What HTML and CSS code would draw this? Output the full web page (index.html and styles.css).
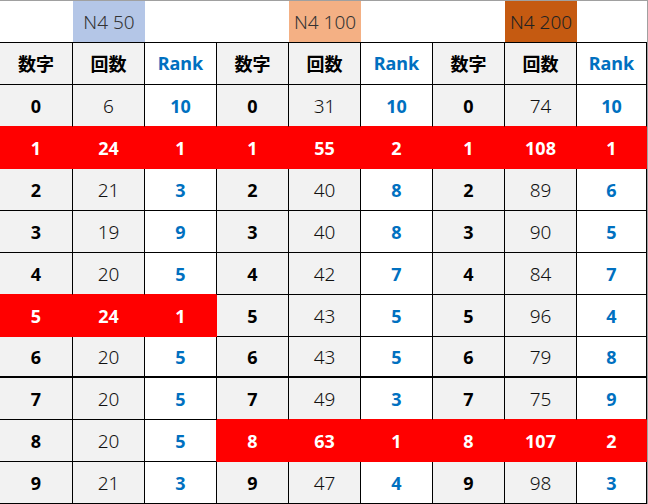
FILE: index.html
```html
<!DOCTYPE html>
<html lang="ja">
<head>
<meta charset="utf-8">
<title>N4</title>
<link rel="stylesheet" href="styles.css">
</head>
<body>
<div class="sheet">
  <div class="t"></div><div class="t lbl blue">N4 50</div><div class="t"></div>
  <div class="t"></div><div class="t lbl orange">N4 100</div><div class="t"></div>
  <div class="t"></div><div class="t lbl brown">N4 200</div><div class="t"></div>

  <div class="h d">数字</div><div class="h d">回数</div><div class="h r">Rank</div>
  <div class="h d">数字</div><div class="h d">回数</div><div class="h r">Rank</div>
  <div class="h d">数字</div><div class="h d">回数</div><div class="h r">Rank</div>

  <div class="d ab">0</div><div class="c ab">6</div><div class="r ab">10</div>
  <div class="d ab">0</div><div class="c ab">31</div><div class="r ab">10</div>
  <div class="d ab">0</div><div class="c ab">74</div><div class="r ab">10</div>

  <div class="red">1</div><div class="red">24</div><div class="red">1</div>
  <div class="red">1</div><div class="red">55</div><div class="red">2</div>
  <div class="red">1</div><div class="red">108</div><div class="red">1</div>

  <div class="d">2</div><div class="c">21</div><div class="r">3</div>
  <div class="d">2</div><div class="c">40</div><div class="r">8</div>
  <div class="d">2</div><div class="c">89</div><div class="r">6</div>

  <div class="d">3</div><div class="c">19</div><div class="r">9</div>
  <div class="d">3</div><div class="c">40</div><div class="r">8</div>
  <div class="d">3</div><div class="c">90</div><div class="r">5</div>

  <div class="d ab">4</div><div class="c ab">20</div><div class="r ab">5</div>
  <div class="d">4</div><div class="c">42</div><div class="r">7</div>
  <div class="d">4</div><div class="c">84</div><div class="r">7</div>

  <div class="red">5</div><div class="red">24</div><div class="red">1</div>
  <div class="d">5</div><div class="c">43</div><div class="r">5</div>
  <div class="d">5</div><div class="c">96</div><div class="r">4</div>

  <div class="d thick">6</div><div class="c thick">20</div><div class="r thick">5</div>
  <div class="d thick">6</div><div class="c thick">43</div><div class="r thick">5</div>
  <div class="d thick">6</div><div class="c thick">79</div><div class="r thick">8</div>

  <div class="d">7</div><div class="c">20</div><div class="r">5</div>
  <div class="d ab">7</div><div class="c ab">49</div><div class="r ab">3</div>
  <div class="d ab">7</div><div class="c ab">75</div><div class="r ab">9</div>

  <div class="d">8</div><div class="c">20</div><div class="r lb">5</div>
  <div class="red">8</div><div class="red">63</div><div class="red">1</div>
  <div class="red">8</div><div class="red">107</div><div class="red">2</div>

  <div class="d">9</div><div class="c">21</div><div class="r">3</div>
  <div class="d">9</div><div class="c">47</div><div class="r">4</div>
  <div class="d">9</div><div class="c">98</div><div class="r">3</div>
</div>
</body>
</html>
```
FILE: styles.css
```css
html, body {
  margin: 0;
  padding: 0;
  background: #ffffff;
}
.sheet {
  width: 648px;
  height: 504px;
  box-sizing: border-box;
  border-top: 1px solid #a0a0a0;
  border-right: 1px solid #a0a0a0;
  display: grid;
  grid-template-columns: 73px repeat(7, 72px) 70px;
  grid-template-rows: 41px 43px repeat(6, 42px) 41px 42px 42px 42px;
  font-family: "Noto Sans", "Noto Sans CJK JP", sans-serif;
  font-size: 18px;
  color: #000;
}
.sheet > div {
  box-sizing: border-box;
  display: flex;
  align-items: center;
  justify-content: center;
  border-right: 1px solid #000;
  border-bottom: 1px solid #000;
}
.sheet > .t {
  border: none;
}
.lbl {
  font-weight: 300;
  font-size: 19px;
  color: #333;
}
.blue { background: #b4c6e7; }
.orange { background: #f4b084; }
.brown { background: #c55a11; color: #222; }
.sheet > .h {
  border-top: 1px solid #000;
  padding-bottom: 2px;
}
.d {
  background: #f2f2f2;
  font-weight: 700;
}
.h.d {
  font-family: "Noto Sans CJK JP", sans-serif;
}
.c {
  background: #f2f2f2;
  font-weight: 300;
  font-size: 19px;
  color: #111;
}
.r {
  background: #ffffff;
  color: #0070c0;
  font-weight: 700;
}
.sheet > .red {
  background: #ff0000;
  color: #ffffff;
  font-weight: 700;
  border-color: #ff0000;
}
.sheet > .ab {
  border-bottom-color: #ff0000;
}
.sheet > .lb {
  border-right-color: #ff0000;
}
.sheet > .thick {
  border-bottom-width: 2px;
}
```
